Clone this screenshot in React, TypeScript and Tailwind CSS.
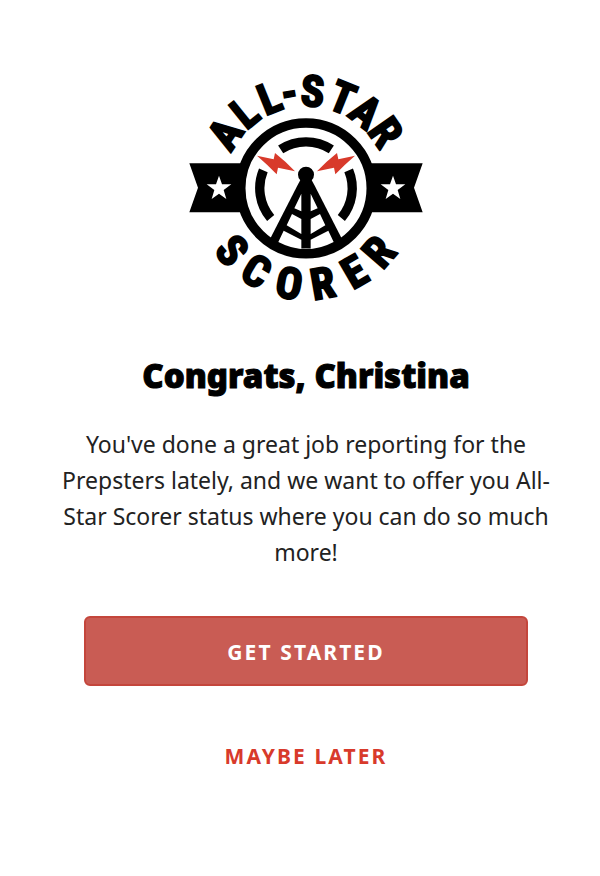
const topLetters = [
    { char: "A", angle: -56 },
    { char: "L", angle: -39 },
    { char: "L", angle: -22 },
    { char: "-", angle: -10 },
    { char: "S", angle: 4 },
    { char: "T", angle: 22 },
    { char: "A", angle: 38 },
    { char: "R", angle: 55 },
];

const bottomLetters = [
    { char: "S", angle: 50 },
    { char: "C", angle: 31 },
    { char: "O", angle: 10 },
    { char: "R", angle: -10 },
    { char: "E", angle: -30 },
    { char: "R", angle: -49 },
];

const star = "0,-37 9,-11 37,-11 14,6 22,33 0,17 -22,33 -14,6 -37,-11 -9,-11";

// one side of the badge, the other side is the same thing mirrored
function BadgeHalf() {
    return (
        <g>
            <path d="M-350 -75 H-190 V72 H-350 L-324 -2 Z" fill="#000" />
            <polygon points={star} transform="translate(-261 -1)" fill="#fff" />
        </g>
    );
}

function RingHalf() {
    return (
        <g>
            <path d="M-128 -54 A139 139 0 0 0 -106 89" fill="none" stroke="#000" strokeWidth="28" />
            <polygon points="-147,-98 -97,-87 -93,-106 -62,-80 -33,-51 -84,-62 -88,-42 -117,-71" fill="#d83a2b" />
            <path d="M0 -30 H-14 L-25 -10 L-111 158 L-86 180 H0 Z" fill="#000" />
            <path d="M-14 16 V69 L-35 60 Z M-42 77 L-14 92 V137 L-58 111 Z M-67 127 L-14 154 V182 Q-50 178 -83 161 Z" fill="#fff" />
        </g>
    );
}

function Logo() {
    return (
        <svg viewBox="0 0 750 750" className="size-[250px]" role="img" aria-label="All-Star Scorer">
            <g transform="translate(375 385)">
                <BadgeHalf />
                <g transform="scale(-1 1)"><BadgeHalf /></g>
                <circle r="196" fill="#fff" stroke="#000" strokeWidth="29" />
                <path d="M-76 -117 A139 139 0 0 1 76 -117" fill="none" stroke="#000" strokeWidth="28" />
                <RingHalf />
                <g transform="scale(-1 1)"><RingHalf /></g>
                <circle cy="-41" r="24" fill="#000" />
                <g
                    className="font-['Liberation_Sans_Narrow','Roboto_Condensed',sans-serif] font-bold"
                    fontSize="130"
                    textAnchor="middle"
                    stroke="#000"
                    strokeWidth="6"
                >
                    {topLetters.map((letter) => (
                        <text key={letter.angle} y="-247" transform={`rotate(${letter.angle})`}>{letter.char}</text>
                    ))}
                    {bottomLetters.map((letter) => (
                        <text key={letter.angle} y="335" transform={`rotate(${letter.angle})`}>{letter.char}</text>
                    ))}
                </g>
            </g>
        </svg>
    );
}

export default function App() {
    return (
        <main className="flex min-h-screen flex-col items-center bg-white pt-15 pr-11 pb-24 pl-14 font-['Noto_Sans',sans-serif] text-center">
            <Logo />
            <h1 className="mt-10 text-[33px] leading-13 font-black text-black [-webkit-text-stroke:1px_black]">
                Congrats, Christina
            </h1>
            <p className="mt-6 text-[23px] leading-9 text-[#222]">
                You've done a great job reporting for the Prepsters lately, and we want to offer you All-Star Scorer status where you can do so much more!
            </p>
            <button
                type="button"
                className="mt-[46px] h-[70px] w-full max-w-[444px] rounded-md border-2 border-[#c4463c] bg-[#c95c54] pt-1 text-[21px] font-bold tracking-widest text-white"
            >
                GET STARTED
            </button>
            <button type="button" className="mt-[54px] text-[21px] leading-8 font-bold tracking-widest text-[#d83a2b]">
                MAYBE LATER
            </button>
        </main>
    );
}
